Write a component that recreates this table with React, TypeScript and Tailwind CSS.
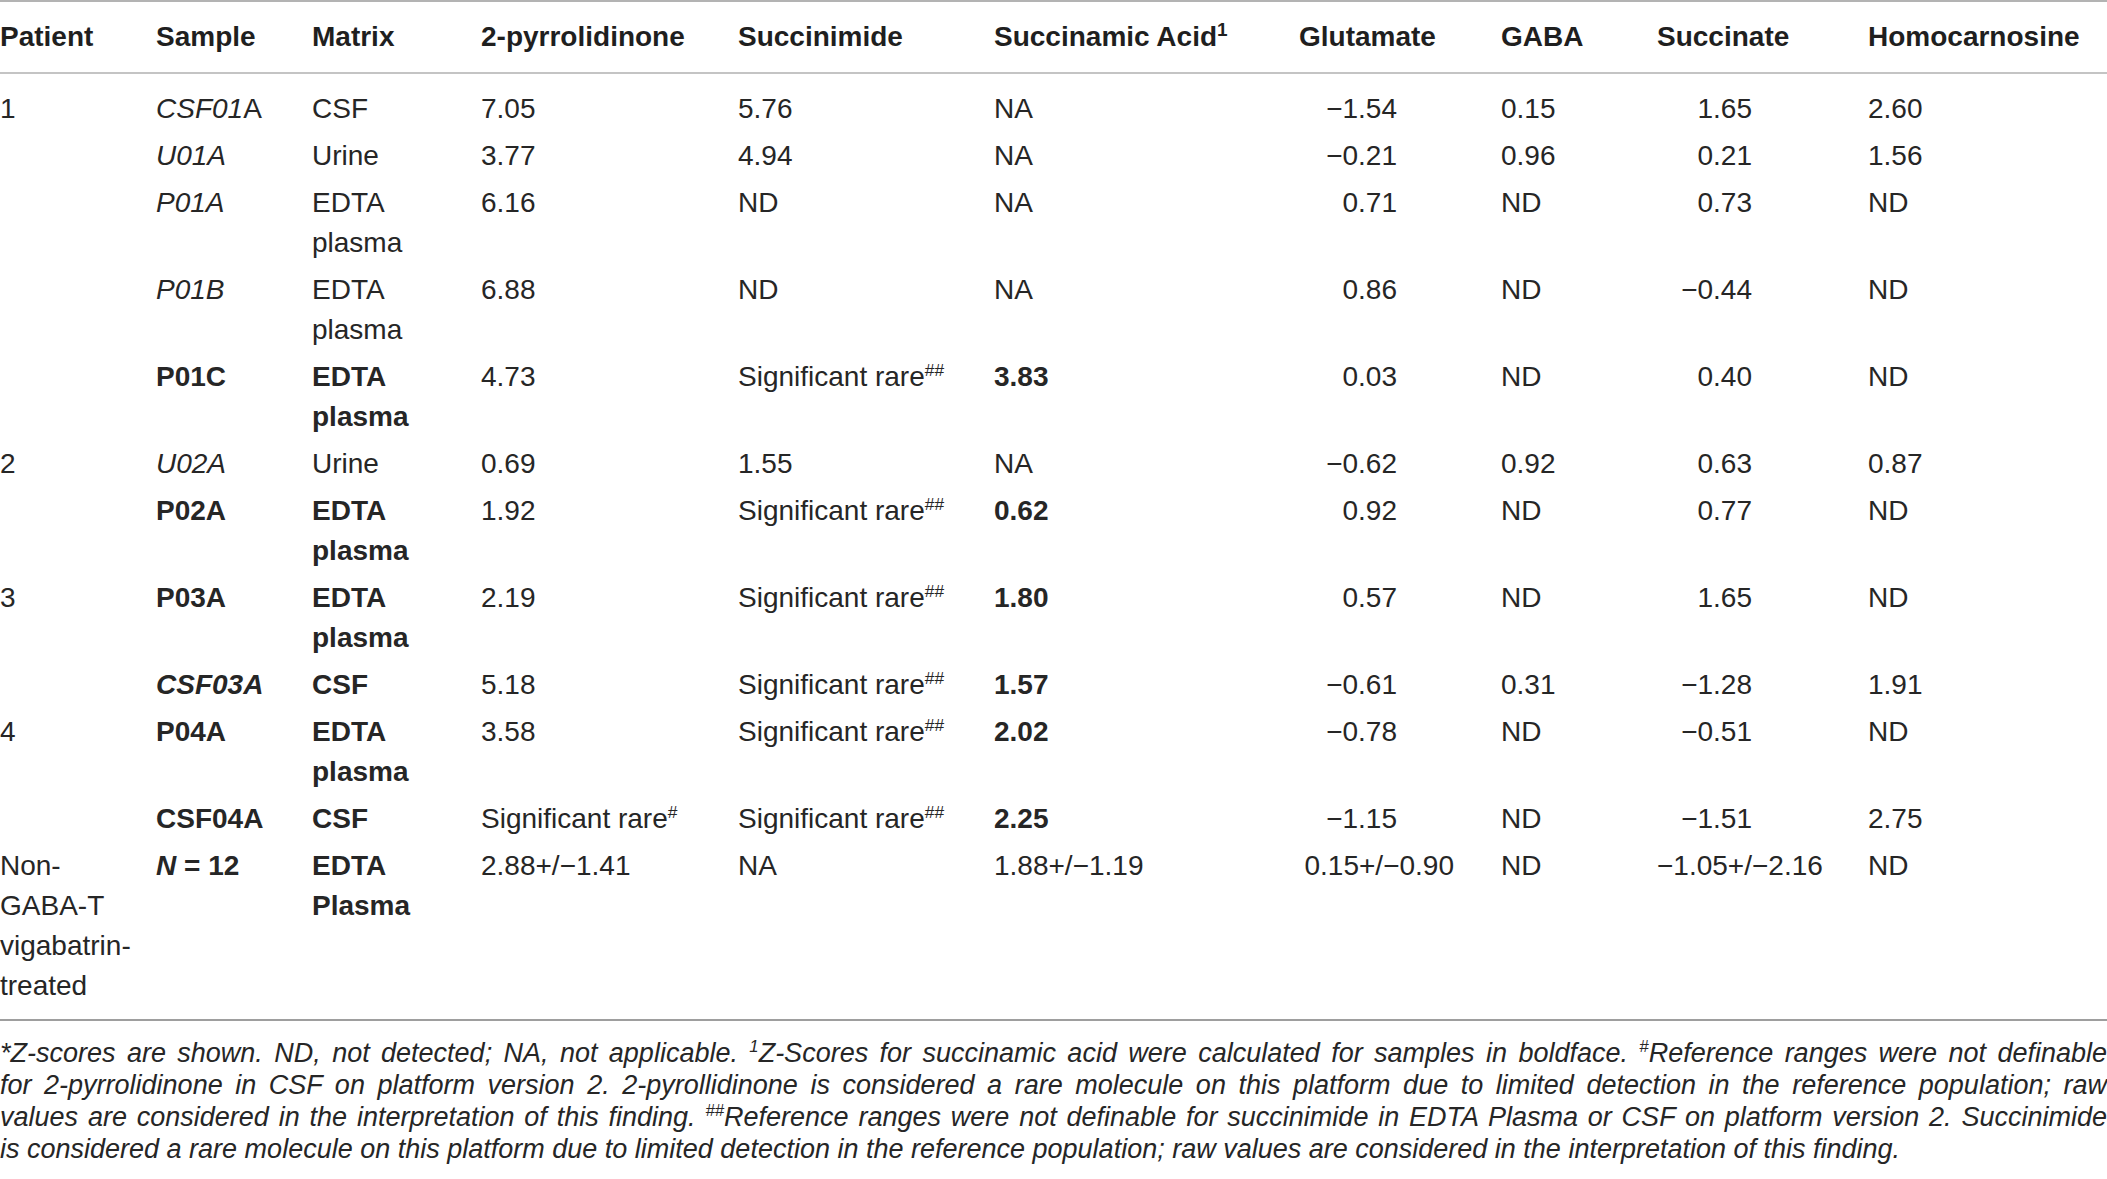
import React from "react";

type Cell = React.ReactNode;

const Sup = ({ children }: { children: React.ReactNode }) => (
  <sup className="text-[0.62em] -top-[0.6em]">{children}</sup>
);

const rare2 = (
  <>
    Significant rare<Sup>##</Sup>
  </>
);

const plasmaBold = (
  <span className="font-bold">
    EDTA
    <br />
    plasma
  </span>
);

const plasma = (
  <>
    EDTA
    <br />
    plasma
  </>
);

// patient, sample, matrix, 2-pyr, succinimide, succinamic, glutamate, gaba, succinate, homocarnosine
const rows: Cell[][] = [
  ["1", <><i>CSF01</i>A</>, "CSF", "7.05", "5.76", "NA", "−1.54", "0.15", "1.65", "2.60"],
  ["", <i>U01A</i>, "Urine", "3.77", "4.94", "NA", "−0.21", "0.96", "0.21", "1.56"],
  ["", <i>P01A</i>, plasma, "6.16", "ND", "NA", "0.71", "ND", "0.73", "ND"],
  ["", <i>P01B</i>, plasma, "6.88", "ND", "NA", "0.86", "ND", "−0.44", "ND"],
  ["", <b>P01C</b>, plasmaBold, "4.73", rare2, <b>3.83</b>, "0.03", "ND", "0.40", "ND"],
  ["2", <i>U02A</i>, "Urine", "0.69", "1.55", "NA", "−0.62", "0.92", "0.63", "0.87"],
  ["", <b>P02A</b>, plasmaBold, "1.92", rare2, <b>0.62</b>, "0.92", "ND", "0.77", "ND"],
  ["3", <b>P03A</b>, plasmaBold, "2.19", rare2, <b>1.80</b>, "0.57", "ND", "1.65", "ND"],
  ["", <b><i>CSF03A</i></b>, <b>CSF</b>, "5.18", rare2, <b>1.57</b>, "−0.61", "0.31", "−1.28", "1.91"],
  ["4", <b>P04A</b>, plasmaBold, "3.58", rare2, <b>2.02</b>, "−0.78", "ND", "−0.51", "ND"],
  ["", <b>CSF04A</b>, <b>CSF</b>, <>Significant rare<Sup>#</Sup></>, rare2, <b>2.25</b>, "−1.15", "ND", "−1.51", "2.75"],
];

const headers: Cell[] = [
  "Patient",
  "Sample",
  "Matrix",
  "2-pyrrolidinone",
  "Succinimide",
  <>Succinamic Acid<sup className="text-[0.68em] -top-[0.55em]">1</sup></>,
  "Glutamate",
  "GABA",
  "Succinate",
  "Homocarnosine",
];

const widths = [
  "w-[156px]",
  "w-[156px]",
  "w-[169px]",
  "w-[257px]",
  "w-[256px]",
  "w-[305px]",
  "w-[202px]",
  "w-[156px]",
  "w-[211px]",
  "w-[239px]",
];

const notes = [
  <>
    *Z-scores are shown. ND, not detected; NA, not applicable. <Sup>1</Sup>Z-Scores for succinamic acid were calculated
    for samples in boldface. <Sup>#</Sup>Reference ranges were not definable
  </>,
  <>
    for 2-pyrrolidinone in CSF on platform version 2. 2-pyrollidinone is considered a rare molecule on this platform due
    to limited detection in the reference population; raw
  </>,
  <>
    values are considered in the interpretation of this finding. <Sup>##</Sup>Reference ranges were not definable for
    succinimide in EDTA Plasma or CSF on platform version 2. Succinimide
  </>,
  <>
    is considered a rare molecule on this platform due to limited detection in the reference population; raw values are
    considered in the interpretation of this finding.
  </>,
];

export default function App() {
  return (
    <div
      className="w-[2107px] bg-white text-[#262626]"
      style={{ fontFamily: '"Liberation Sans", Arial, sans-serif' }}
    >
      <table className="w-full table-fixed border-collapse text-[28px] leading-[40px]">
        <colgroup>
          {widths.map((w, i) => (
            <col key={i} className={w} />
          ))}
        </colgroup>
        <thead>
          <tr className="border-t-2 border-b-2 border-t-[#b3b3b3] border-b-[#c4c4c4]">
            {headers.map((h, i) => (
              <th key={i} className="p-0 pt-[15px] pb-[15px] text-left align-top font-bold text-[#1f1f1f]">
                {h}
              </th>
            ))}
          </tr>
        </thead>
        <tbody>
          {rows.map((r, ri) => (
            <tr key={ri}>
              {r.map((c, ci) => (
                <td
                  key={ci}
                  className={
                    "p-0 align-top " +
                    (ri === 0 ? "pt-[15px] pb-[4px] " : "pt-[3px] pb-[4px] ") +
                    (ci === 6 ? "text-right pr-[104px]" : ci === 8 ? "text-right pr-[116px]" : "text-left")
                  }
                >
                  {c}
                </td>
              ))}
            </tr>
          ))}
          <tr className="border-b-2 border-b-[#9e9e9e]">
            <td className="p-0 pt-[3px] pb-[13px] align-top">
              Non-
              <br />
              GABA-T
              <br />
              vigabatrin-
              <br />
              treated
            </td>
            <td className="p-0 pt-[3px] align-top font-bold">
              <i>N</i> = 12
            </td>
            <td className="p-0 pt-[3px] align-top font-bold">
              EDTA
              <br />
              Plasma
            </td>
            <td className="p-0 pt-[3px] align-top whitespace-nowrap">2.88+/−1.41</td>
            <td className="p-0 pt-[3px] align-top">NA</td>
            <td className="p-0 pt-[3px] align-top whitespace-nowrap">1.88+/−1.19</td>
            <td className="p-0 pt-[3px] align-top text-right pr-[47px] whitespace-nowrap">0.15+/−0.90</td>
            <td className="p-0 pt-[3px] align-top">ND</td>
            <td className="p-0 pt-[3px] align-top text-right pr-[49px] whitespace-nowrap">−1.05+/−2.16</td>
            <td className="p-0 pt-[3px] align-top">ND</td>
          </tr>
        </tbody>
      </table>

      <div className="mt-[16px] text-[27px] italic leading-[32px]">
        {notes.map((n, i) => (
          <div
            key={i}
            className={i < notes.length - 1 ? "text-justify [text-align-last:justify]" : "text-left"}
          >
            {n}
          </div>
        ))}
      </div>
    </div>
  );
}
